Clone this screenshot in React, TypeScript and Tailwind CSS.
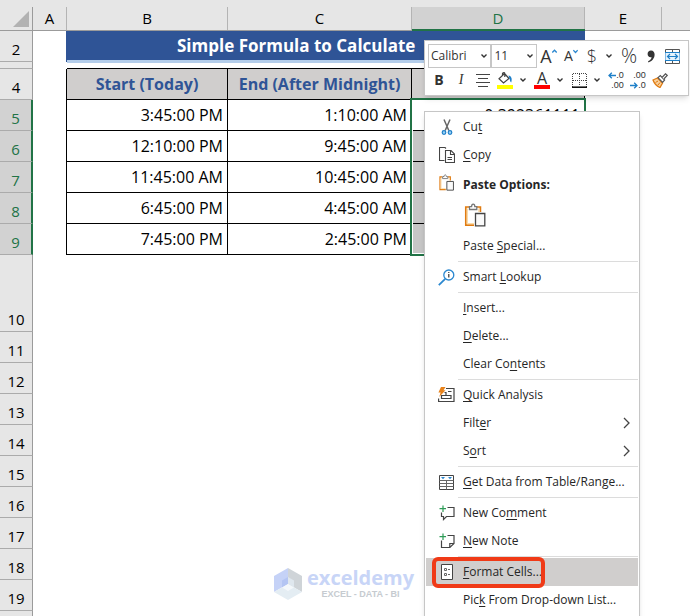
import React from 'react';

interface TimeRow {
  row: number;
  start: string;
  end: string;
  result: string;
}

interface MenuEntry {
  before?: string;
  key?: string;
  after?: string;
  icon?: React.ReactNode;
  submenu?: boolean;
  active?: boolean;
  separator?: boolean;
}

const timeRows: TimeRow[] = [
  { row: 5, start: '3:45:00 PM', end: '1:10:00 AM', result: '0.392361111' },
  { row: 6, start: '12:10:00 PM', end: '9:45:00 AM', result: '' },
  { row: 7, start: '11:45:00 AM', end: '10:45:00 AM', result: '' },
  { row: 8, start: '6:45:00 PM', end: '4:45:00 AM', result: '' },
  { row: 9, start: '7:45:00 PM', end: '2:45:00 PM', result: '' },
];

const emptyRows = [11, 12, 13, 14, 15, 16, 17, 18, 19];

const ScissorsIcon = () => (
  <svg width="14" height="18" viewBox="1 0 14 18" fill="none">
    <path d="M5 1.5 L9.8 12.5 M11 1.5 L6.2 12.5" stroke="#666" strokeWidth="1.5" />
    <circle cx="5" cy="14.5" r="1.8" fill="#9cd3f5" stroke="#1e7fc8" strokeWidth="1.2" />
    <circle cx="11" cy="14.5" r="1.8" fill="#9cd3f5" stroke="#1e7fc8" strokeWidth="1.2" />
  </svg>
);

const CopyIcon = () => (
  <svg width="16" height="16" viewBox="0 0 16 16" fill="none" stroke="#444" strokeWidth="1.1">
    <path d="M5.5 13.5 H0.5 V0.5 H6 L7 1.5" />
    <path d="M6.5 3.5 H12 L15.5 7 V15.5 H6.5 Z" fill="#fff" />
    <path d="M11.5 3.5 V7.5 H15.5 M8.5 10.5 H13 M8.5 12.5 H13" />
  </svg>
);

const ClipboardIcon = ({ size }: { size: number }) => (
  <svg width={size} height={size} viewBox="0 0 22 24" fill="none">
    <path d="M5 4 H1.8 V22.2 H10 M13 4 H16.4 V9" stroke="#e07b10" strokeWidth="1.7" />
    <path d="M3.4 5.5 V20.6 H10 M14.8 5.5 V9" stroke="#fbdca8" strokeWidth="1.2" />
    <path d="M5.5 6.5 V3.6 H7.6 C7.6 0.4 10.8 0.4 10.8 3.6 H12.8 V6.5 Z" fill="#fff" stroke="#777" strokeWidth="1.3" />
    <path d="M11.5 10.5 H20.8 V22.8 H11.5 Z" fill="#fafafa" stroke="#444" strokeWidth="1.3" />
  </svg>
);

const LookupIcon = () => (
  <svg width="17" height="17" viewBox="0 0 17 17" fill="none">
    <circle cx="10.8" cy="6" r="5" stroke="#2b88d0" strokeWidth="1.3" />
    <path d="M7.2 9.8 L0.8 16.2" stroke="#2b88d0" strokeWidth="1.8" />
    <path d="M10.8 5 V8.6 M10.8 2.9 V4" stroke="#333" strokeWidth="1.2" />
  </svg>
);

const AnalysisIcon = () => (
  <svg width="17" height="16" viewBox="0 0 17 16" fill="none">
    <path d="M8 1.5 H16 V14.5 H0.6 V11.5" stroke="#444" strokeWidth="1.2" />
    <path d="M3.5 11.5 H13 V8.5 H3.5 Z M8 8 V5.5 H6.5 M10 4.5 H13.5" stroke="#444" strokeWidth="1.2" />
    <path d="M3 0 H7.5 L5.5 3.2 H7.5 L1.2 10 L2.6 5.6 H0.4 Z" fill="#e8821a" />
  </svg>
);

const TableIcon = () => (
  <svg width="15" height="15" viewBox="0 0 15 15" fill="none">
    <path d="M0.5 0.5 H14.5 V14.5 H0.5 Z" stroke="#444" />
    <path d="M0.5 5.5 H14.5 M0.5 8.5 H14.5 M0.5 11.5 H14.5 M7.5 5.5 V14.5" stroke="#666" />
    <path d="M2 2 H6 L4 4.2 Z M9 2 H13 L11 4.2 Z" fill="#2b88d0" />
  </svg>
);

const CommentIcon = () => (
  <svg width="16" height="16" viewBox="0 0 16 16" fill="none">
    <path d="M8.5 2.5 H15 V11.5 H7.5 L4.5 14.5 V11.5 H2.5 V7.5" stroke="#444" strokeWidth="1.2" />
    <path d="M4 0.5 V7 M0.5 3.7 H7" stroke="#2e9c57" strokeWidth="1.2" />
  </svg>
);

const NoteIcon = () => (
  <svg width="16" height="16" viewBox="0 0 16 16" fill="none">
    <path d="M8.5 2.5 H15 V10.5 L10.8 14.5 H2.5 V7.5" stroke="#444" strokeWidth="1.2" />
    <path d="M15 10.5 H10.8 V14.5" stroke="#444" strokeWidth="1.2" />
    <path d="M4 0.5 V7 M0.5 3.7 H7" stroke="#2e9c57" strokeWidth="1.2" />
  </svg>
);

const FormatIcon = () => (
  <svg width="12" height="16" viewBox="0 0 12 16" fill="none">
    <path d="M0.5 0.5 H11.5 V15.5 H0.5 Z" fill="#fff" stroke="#444" />
    <path d="M3.5 4.5 H5.5 V6.5 H3.5 Z M3.5 9.5 H5.5 V11.5 H3.5 Z" stroke="#666" />
    <path d="M7 5.5 H9 M7 10.5 H9" stroke="#666" />
  </svg>
);

const menuAfterPaste: MenuEntry[] = [
  { before: 'Paste ', key: 'S', after: 'pecial...' },
  { separator: true },
  { before: 'Smart ', key: 'L', after: 'ookup', icon: <LookupIcon /> },
  { separator: true },
  { key: 'I', after: 'nsert...' },
  { key: 'D', after: 'elete...' },
  { before: 'Clear Co', key: 'n', after: 'tents' },
  { separator: true },
  { key: 'Q', after: 'uick Analysis', icon: <AnalysisIcon /> },
  { before: 'Filt', key: 'e', after: 'r', submenu: true },
  { before: 'S', key: 'o', after: 'rt', submenu: true },
  { separator: true },
  { key: 'G', after: 'et Data from Table/Range...', icon: <TableIcon /> },
  { separator: true },
  { before: 'New Co', key: 'm', after: 'ment', icon: <CommentIcon /> },
  { key: 'N', after: 'ew Note', icon: <NoteIcon /> },
  { separator: true },
  { key: 'F', after: 'ormat Cells...', icon: <FormatIcon />, active: true },
  { before: 'Pic', key: 'k', after: ' From Drop-down List...' },
];

const MenuItem = ({ entry }: { entry: MenuEntry }) => {
  if (entry.separator) {
    return <hr className="my-px ml-8 border-[#dcdcdc]" />;
  }
  return (
    <button
      role="menuitem"
      className={`relative flex h-7 w-full items-center text-left ${entry.active ? 'bg-[#d0cecd]' : ''}`}
    >
      <span className="flex w-[37px] shrink-0 justify-center pl-1">{entry.icon}</span>
      <span className="whitespace-nowrap">
        {entry.before}
        <span className="underline underline-offset-2">{entry.key}</span>
        {entry.after}
      </span>
      {entry.submenu && (
        <svg className="mr-2 ml-auto" width="7" height="12" viewBox="0 0 7 12" fill="none" stroke="#444" strokeWidth="1.3">
          <path d="M1 1 L6 6 L1 11" />
        </svg>
      )}
      {entry.active && (
        <span className="absolute -top-px left-1.5 h-[31px] w-[113px] rounded-md border-4 border-[#f03a17]" />
      )}
    </button>
  );
};

const ContextMenu = () => (
  <div
    role="menu"
    className="absolute top-[111px] left-[424px] w-[216px] border border-[#c6c6c6] bg-white p-px pb-4 text-xs text-[#262626] shadow-md"
  >
    <MenuItem entry={{ before: 'Cu', key: 't', icon: <ScissorsIcon /> }} />
    <MenuItem entry={{ key: 'C', after: 'opy', icon: <CopyIcon /> }} />
    <div className="flex h-[31px] items-center font-bold">
      <span className="flex w-[37px] justify-center pl-1 pb-1"><ClipboardIcon size={17} /></span>
      Paste Options:
    </div>
    <button role="menuitem" aria-label="Paste" className="flex h-8 w-full items-center pb-0.5 pl-[37px]">
      <ClipboardIcon size={24} />
    </button>
    {menuAfterPaste.map((entry, i) => (
      <MenuItem key={i} entry={entry} />
    ))}
  </div>
);

const Chevron = () => (
  <svg width="6" height="4" viewBox="0 0 6 4" fill="none" stroke="#333" strokeWidth="1.4">
    <path d="M0.5 0.5 L3 3 L5.5 0.5" />
  </svg>
);

const ToolButton = ({ label, className, children }: { label: string; className: string; children: React.ReactNode }) => (
  <button aria-label={label} className={`flex h-6 shrink-0 items-center justify-center ${className}`}>
    {children}
  </button>
);

const MiniToolbar = () => (
  <div className="absolute top-10 left-[424px] w-[265px] border border-[#c6c6c6] bg-white p-[3px] text-[#333] shadow-md">
    <div className="flex">
      <label className="relative flex w-16 items-center">
        <select aria-label="Font" className="h-6 w-full appearance-none border border-[#c6c6c6] pl-0.5 text-xs">
          <option>Calibri</option>
        </select>
        <span className="absolute right-1"><Chevron /></span>
      </label>
      <label className="relative flex w-[46px] items-center">
        <select aria-label="Font size" className="h-6 w-full appearance-none border border-[#c6c6c6] pl-0.5 text-xs">
          <option>11</option>
        </select>
        <span className="absolute right-1"><Chevron /></span>
      </label>
      <ToolButton label="Increase font size" className="w-[23px]">
        <span className="text-lg leading-6">A</span>
        <svg width="5" height="14" viewBox="0 0 5 14" fill="none" stroke="#2b88d0" strokeWidth="1.3">
          <path d="M0.3 3.5 L2.5 1.2 L4.7 3.5" />
        </svg>
      </ToolButton>
      <ToolButton label="Decrease font size" className="w-[22px]">
        <span className="text-sm leading-6">A</span>
        <svg width="5" height="14" viewBox="0 0 5 14" fill="none" stroke="#2b88d0" strokeWidth="1.3">
          <path d="M0.3 1.2 L2.5 3.5 L4.7 1.2" />
        </svg>
      </ToolButton>
      <ToolButton label="Accounting format" className="w-5 text-lg leading-6 font-light">$</ToolButton>
      <ToolButton label="Currency options" className="w-3.5"><Chevron /></ToolButton>
      <ToolButton label="Percent" className="w-[26px] text-xl leading-6 font-light">%</ToolButton>
      <ToolButton label="Comma style" className="w-[18px]">
        <svg width="8" height="13" viewBox="0 0 8 13" fill="#333">
          <path d="M4 0.5 C6.4 0.5 7.6 2.2 7.6 4.6 C7.6 8.4 5 11.4 1.6 12.4 L1 11.2 C3.2 10.2 4.4 8.8 4.6 7.2 C2.2 7.8 0.6 6.2 0.6 4 C0.6 2 2 0.5 4 0.5 Z" />
        </svg>
      </ToolButton>
      <ToolButton label="Merge and center" className="w-[25px]">
        <svg width="15" height="15" viewBox="0 0 15 15" fill="none">
          <path d="M0.5 0.5 H14.5 V14.5 H0.5 Z M0.5 3.5 H14.5 M0.5 11.5 H14.5 M7.5 0.5 V3.5 M7.5 11.5 V14.5" stroke="#555" />
          <path d="M0 3.5 H15 V11.5 H0 Z" fill="#e6f3fc" stroke="#1e7fc8" />
          <path d="M2.5 7.5 H12.5 M5 5 L2.5 7.5 L5 10 M10 5 L12.5 7.5 L10 10" stroke="#1e7fc8" strokeWidth="1.2" />
        </svg>
      </ToolButton>
    </div>
    <div className="flex">
      <ToolButton label="Bold" className="w-[22px] text-sm font-bold">B</ToolButton>
      <ToolButton label="Italic" className="w-[22px] font-['Liberation_Serif',serif] text-sm italic">I</ToolButton>
      <ToolButton label="Center" className="w-[22px]">
        <svg width="14" height="13" viewBox="0 0 14 13" stroke="#444">
          <path d="M0 0.5 H14 M2 4.5 H12 M0 8.5 H14 M2 12.5 H12" />
        </svg>
      </ToolButton>
      <ToolButton label="Fill color" className="w-[22px]">
        <svg width="16" height="17" viewBox="0 0 16 17" fill="none">
          <path d="M7.5 1.5 L12 6.5 L6.5 11 L2 6.8 Z M5.5 3.8 V1.5 C5.5 0.4 7.8 0.4 7.8 1.5 V5" stroke="#444" strokeWidth="1.2" />
          <path d="M11.5 3.6 C14.6 4.2 15.4 7 14.2 10.6 C13 9.6 13 7.6 12.4 6.4 Z" fill="#1e7fc8" />
          <path d="M0 13 H16 V17 H0 Z" fill="#ffff00" />
        </svg>
      </ToolButton>
      <ToolButton label="Fill options" className="w-3.5"><Chevron /></ToolButton>
      <ToolButton label="Font color" className="w-6 flex-col">
        <span className="text-base leading-3">A</span>
        <span className="mt-px h-1 w-4 bg-[#ff0000]" />
      </ToolButton>
      <ToolButton label="Font color options" className="w-3"><Chevron /></ToolButton>
      <ToolButton label="Borders" className="w-[26px]">
        <svg width="15" height="15" viewBox="0 0 15 15" fill="none">
          <path d="M0.5 14 V0.5 H14.5 V14 M7.5 1 V13 M1 7.5 H14" stroke="#444" strokeDasharray="1 1" />
          <path d="M0 14.2 H15" stroke="#111" strokeWidth="1.6" />
        </svg>
      </ToolButton>
      <ToolButton label="Border options" className="w-2.5"><Chevron /></ToolButton>
      <ToolButton label="Increase decimal" className="w-7 font-['Liberation_Sans',sans-serif]">
        <span className="flex flex-col items-end text-[9px] leading-[10px]">
          <span className="flex items-center">
            <svg width="8" height="7" viewBox="0 0 8 7" fill="none" stroke="#1e7fc8" strokeWidth="1.3">
              <path d="M8 3.5 H1 M3.8 0.7 L1 3.5 L3.8 6.3" />
            </svg>
            .0
          </span>
          <span>.00</span>
        </span>
      </ToolButton>
      <ToolButton label="Decrease decimal" className="w-4 font-['Liberation_Sans',sans-serif]">
        <span className="flex flex-col items-end text-[9px] leading-[10px]">
          <span>.00</span>
          <span className="flex items-center">
            <svg width="8" height="7" viewBox="0 0 8 7" fill="none" stroke="#1e7fc8" strokeWidth="1.3">
              <path d="M0 3.5 H7 M4.2 0.7 L7 3.5 L4.2 6.3" />
            </svg>
            .0
          </span>
        </span>
      </ToolButton>
      <ToolButton label="Format painter" className="w-7">
        <svg width="16" height="15" viewBox="0 0 16 15" fill="none">
          <path d="M1 7 L5.5 5 L10.5 10 L8 14.5 C5 13.5 2.5 11 1 7 Z" fill="#f9cf9a" stroke="#e07b10" strokeWidth="1.3" />
          <path d="M3.5 9.5 L6 8 M6 12 L8 9.5" stroke="#e07b10" />
          <path d="M6 4.6 L8.3 2.6 L12.6 7 L10.6 9.3 Z" fill="#fff" stroke="#555" strokeWidth="1.2" />
          <path d="M10 4.5 L13.5 0.8 L15.2 2.4 L11.8 6" fill="#fff" stroke="#555" strokeWidth="1.2" />
        </svg>
      </ToolButton>
    </div>
  </div>
);

const ColumnHead = ({ name, selected = false }: { name: string; selected?: boolean }) => (
  <th
    scope="col"
    className={`p-0 pt-[7px] font-normal ${selected ? 'border-b-2 border-[#217346] text-[#217346]' : 'border-b border-[#9b9b9b]'}`}
  >
    <div
      className={`flex items-center justify-center border-r border-[#b4b4b4] ${selected ? 'h-[22px] bg-[#d2d2d2]' : 'h-[23px]'}`}
    >
      {name}
    </div>
  </th>
);

const RowHead = ({ row, selected = false, height = 'h-[30px]' }: { row?: number; selected?: boolean; height?: string }) => (
  <th
    scope="row"
    className={`border-b border-b-[#ababab] p-0 text-center text-[15px] font-normal ${
      selected ? 'border-r-2 border-r-[#217346] bg-[#d2d2d2] text-[#217346]' : 'border-r border-r-[#9b9b9b] bg-[#e6e6e6] text-black'
    }`}
  >
    <div className={`flex flex-col justify-end overflow-hidden pb-0.5 leading-5 ${height}`}>{row}</div>
  </th>
);

const Sheet = () => (
  <table className="w-full table-fixed border-separate border-spacing-0 text-[15px] text-black">
    <colgroup>
      <col className="w-[33px]" />
      <col className="w-[34px]" />
      <col className="w-[161px]" />
      <col className="w-[184px]" />
      <col className="w-[173px]" />
      <col className="w-[77px]" />
      <col />
    </colgroup>
    <thead className="bg-[#e6e6e6]">
      <tr className="h-[31px]">
        <th className="border-b border-[#9b9b9b] p-0 pt-[7px]">
          <div className="flex h-[23px] items-center justify-end border-r border-[#9b9b9b] pr-[3px]">
            <svg width="16" height="16" viewBox="0 0 16 16">
              <path d="M16 0 V16 H0 Z" fill="#b2b2b2" />
            </svg>
          </div>
        </th>
        <ColumnHead name="A" />
        <ColumnHead name="B" />
        <ColumnHead name="C" />
        <ColumnHead name="D" selected />
        <ColumnHead name="E" />
        <th className="border-b border-[#9b9b9b] p-0" />
      </tr>
    </thead>
    <tbody>
      <tr className="h-[31px]">
        <RowHead row={2} />
        <td className="border-r border-[#2f5496] p-0" />
        <td
          colSpan={3}
          className="border-b-2 border-[#b4cdea] bg-[#2f5496] py-0 pr-0 pl-[110px] text-[17px] leading-6 font-bold whitespace-nowrap text-white"
        >
          Simple Formula to Calculate
        </td>
        <td colSpan={2} className="p-0" />
      </tr>
      <tr className="h-[7px]">
        <RowHead row={3} height="h-1.5" />
        <td className="p-0" />
        <td colSpan={3} className="border-t border-b border-t-[#b4cdea] border-b-black p-0" />
        <td colSpan={2} className="p-0" />
      </tr>
      <tr className="h-[31px] text-base font-bold text-[#2f5496]">
        <RowHead row={4} />
        <td className="border-r border-black p-0" />
        <td className="border-r border-b border-black bg-[#d0cecd] p-0 text-center whitespace-nowrap">Start (Today)</td>
        <td className="border-r border-b border-black bg-[#d0cecd] p-0 text-center whitespace-nowrap">End (After Midnight)</td>
        <td className="border-r border-b border-black bg-[#d0cecd] p-0" />
        <td colSpan={2} className="p-0" />
      </tr>
      {timeRows.map(item => (
        <tr key={item.row} className="h-[31px] text-right text-base">
          <RowHead row={item.row} selected />
          <td className="border-r border-black p-0" />
          <td className="border-r border-b border-black py-0 pr-1 pl-0 whitespace-nowrap">{item.start}</td>
          <td className="border-r border-b border-black py-0 pr-1 pl-0 whitespace-nowrap">{item.end}</td>
          <td className={`border-r border-b border-black py-0 pr-1 pl-0 ${item.result ? 'relative' : 'bg-[#c6c6c6]'}`}>
            {item.result}
            {item.result && (
              <span className="absolute -top-0.5 -left-0.5 h-[158px] w-44 border-2 border-[#217346] shadow-[inset_0_0_0_1px_white]" />
            )}
          </td>
          <td colSpan={2} className="p-0" />
        </tr>
      ))}
      <tr className="h-[77px]">
        <RowHead row={10} height="h-[76px]" />
        <td colSpan={6} className="p-0" />
      </tr>
      {emptyRows.map(row => (
        <tr key={row} className="h-[31px]">
          <RowHead row={row} />
          <td colSpan={6} className="p-0" />
        </tr>
      ))}
      <tr>
        <RowHead />
        <td colSpan={6} className="p-0" />
      </tr>
    </tbody>
  </table>
);

const Watermark = () => (
  <div className="absolute top-[568px] left-[274px] flex items-center gap-[5px] font-bold">
    <svg width="28" height="32" viewBox="0 0 28 32">
      <path d="M14 0 L0 8 V24 L14 16 Z" fill="#c5d2f7" />
      <path d="M14 0 L28 8 V24 L14 16 Z" fill="#cfd4d8" />
      <path d="M0 24 L14 16 L28 24 L14 32 Z" fill="#e4edf3" />
      <path d="M14 9 L8 12.5 V19.5 L14 16 Z" fill="#b4c5f3" />
      <path d="M14 9 L20 12.5 V19.5 L14 16 Z" fill="#dfe7ee" />
      <path d="M8 19.5 L14 16 L20 19.5 L14 23 Z" fill="#f4f8fb" />
    </svg>
    <div className="text-center">
      <div className="text-xl leading-5 text-[#c8d5f7]">exceldemy</div>
      <div className="font-['Liberation_Sans',sans-serif] text-[9px] leading-3 text-[#c6cbd0]">EXCEL - DATA - BI</div>
    </div>
  </div>
);

const App: React.FC = () => {
  return (
    <div className="relative h-screen overflow-hidden bg-white font-['Open_Sans','Noto_Sans',sans-serif]">
      <Sheet />
      <Watermark />
      <ContextMenu />
      <MiniToolbar />
    </div>
  );
};

export default App;
